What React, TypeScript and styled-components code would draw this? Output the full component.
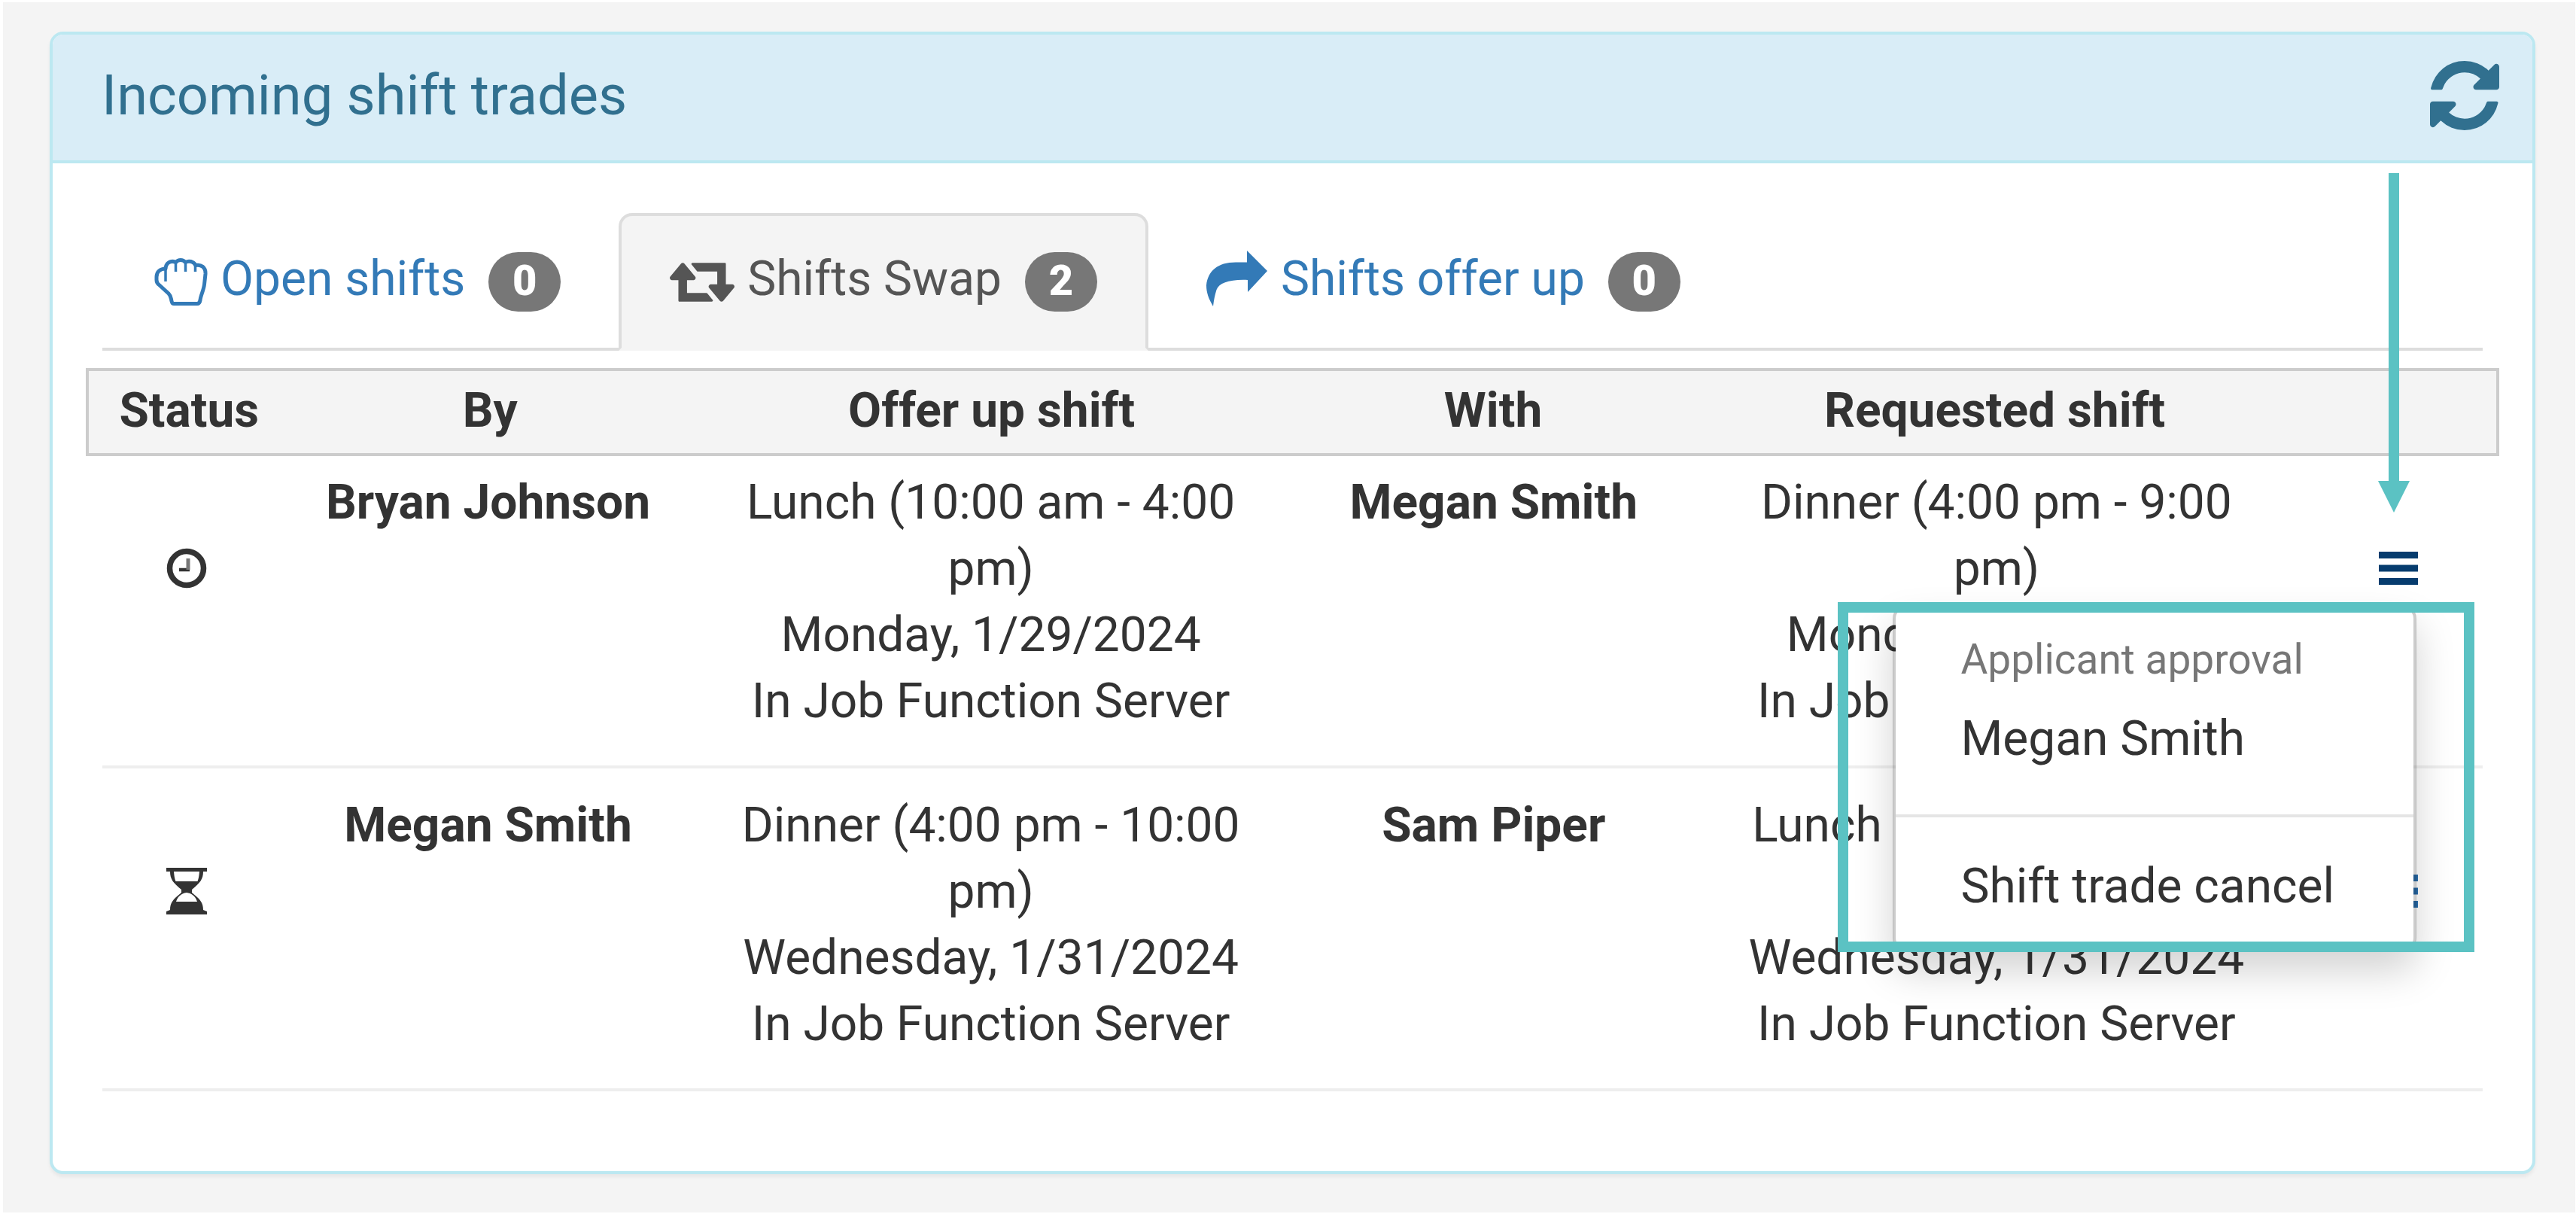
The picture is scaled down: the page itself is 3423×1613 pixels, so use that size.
import React from "react";
import styled, { createGlobalStyle } from "styled-components";

const GlobalStyle = createGlobalStyle`
  *, *::before, *::after { box-sizing: border-box; }
  body {
    margin: 0;
    background: #ffffff;
    color: #333333;
    font-family: Roboto, "Open Sans", sans-serif;
    font-size: 64px;
    line-height: 88px;
  }
  button { font: inherit; color: inherit; background: none; border: 0; padding: 0; cursor: pointer; }
  svg { display: block; flex: none; }
`;

const Page = styled.div`
  position: relative;
  min-height: 100vh;
  padding: 3px 1px 2px 4px;
  display: flex;
`;

const Backdrop = styled.main`
  flex: 1;
  padding: 39px 53px 51px 62px;
  background: #f4f4f4;
`;

const Panel = styled.section`
  background: #ffffff;
  border: 4px solid #bce8f1;
  border-radius: 18px;
  box-shadow: 0 4px 4px rgba(0, 0, 0, 0.05);
`;

const PanelHeader = styled.header`
  display: flex;
  align-items: center;
  justify-content: space-between;
  height: 171px;
  padding: 0 44px 5px 65px;
  background: #d9edf7;
  border-bottom: 4px solid #bce8f1;
  border-radius: 14px 14px 0 0;
  color: #31708f;
`;

const Title = styled.h1`
  margin: 0;
  font-size: 74px;
  font-weight: 400;
`;

const PanelBody = styled.div`
  padding: 66px 44px 106px;
`;

const Tabs = styled.nav`
  display: flex;
  gap: 9px;
  margin: 0 22px 23px;
  border-bottom: 4px solid #dddddd;
`;

const Tab = styled.button<{ $active?: boolean }>`
  display: flex;
  align-items: center;
  height: 183px;
  margin-bottom: -4px;
  padding: 0 64px;
  border: 4px solid transparent;
  border-radius: 18px 18px 0 0;
  color: ${(p) => (p.$active ? "#555555" : "#337ab7")};
  ${(p) =>
    p.$active &&
    `background: #f4f4f4;
     border-color: #dddddd #dddddd #f4f4f4;`}
`;

const TabLabel = styled.span`
  margin: 0 31px 0 17px;
  padding-bottom: 8px;
`;

const Badge = styled.span`
  min-width: 96px;
  height: 79px;
  border-radius: 44px;
  background: #777777;
  color: #ffffff;
  font-size: 56px;
  font-weight: 900;
  line-height: 76px;
  text-align: center;
`;

const Table = styled.table`
  display: block;
`;

const TableHead = styled.thead`
  display: block;
`;

const TableBody = styled.tbody`
  display: block;
`;

const columns = `
  display: grid;
  grid-template-columns: 1fr 2fr 3fr 2fr 3fr 1fr;
`;

const HeadRow = styled.tr`
  ${columns}
  height: 117px;
  margin-bottom: 18px;
  background: #f4f4f4;
  border: 4px solid #cccccc;
`;

const HeadCell = styled.th`
  padding: 9px 0;
  font-weight: 700;
`;

const Row = styled.tr`
  ${columns}
  padding-bottom: 45px;
  margin-bottom: 32px;
  background: linear-gradient(#eeeeee, #eeeeee) no-repeat center bottom / calc(100% - 44px) 4px;
  &:last-child { margin-bottom: 0; }
`;

const NameCell = styled.td`
  padding: 0;
  font-weight: 700;
  text-align: center;
`;

const ShiftCell = styled.td`
  padding: 0 48px;
  text-align: center;
`;

const IconCell = styled.td`
  display: flex;
  justify-content: center;
  padding: 87px 0 0;
`;

const IconSlot = styled.div`
  position: relative;
  display: flex;
  align-items: center;
  height: 88px;
`;

const MenuButton = styled.button<{ $open?: boolean }>`
  color: ${(p) => (p.$open ? "#063c6e" : "#2a6fae")};
`;

const Dropdown = styled.div`
  position: absolute;
  top: 93px;
  right: 2px;
  z-index: 1;
  width: 696px;
  padding: 22px 0;
  background: #ffffff;
  background-clip: padding-box;
  border: 4px solid rgba(0, 0, 0, 0.2);
  border-radius: 18px;
  box-shadow: 0 26px 52px rgba(0, 0, 0, 0.175);
`;

const DropdownHeading = styled.div`
  padding: 0 86px;
  font-size: 55px;
  line-height: 92px;
  color: #777777;
  white-space: nowrap;
`;

const DropdownItem = styled.button`
  display: block;
  width: 100%;
  padding: 16px 86px;
  text-align: left;
  white-space: nowrap;
`;

const Divider = styled.hr`
  height: 4px;
  margin: 40px 0 32px;
  border: 0;
  background: #e5e5e5;
`;

const Highlight = styled.div`
  position: absolute;
  top: 800px;
  right: 135px;
  z-index: 2;
  width: 846px;
  height: 465px;
  border: 14px solid #5bc2c3;
  pointer-events: none;
`;

const Pointer = styled.svg`
  position: absolute;
  top: 230px;
  right: 221px;
  z-index: 2;
`;

const RefreshIcon = () => (
  <svg width="92" height="92" viewBox="0 0 1536 1536" fill="currentColor" aria-hidden="true">
    <path d="M1511 928q0 5-1 7-64 268-268 434.5t-478 166.5q-146 0-282.5-55t-243.5-157l-129 129q-19 19-45 19t-45-19-19-45v-448q0-26 19-45t45-19h448q26 0 45 19t19 45-19 45l-137 137q71 66 161 102t187 36q134 0 250-65t186-179q11-17 53-117 8-23 30-23h192q13 0 22.500 9.500t9.500 22.500zm25-800v448q0 26-19 45t-45 19h-448q-26 0-45-19t-19-45 19-45l138-138q-148-137-349-137-134 0-250 65t-186 179q-11 17-53 117-8 23-30 23h-199q-13 0-22.500-9.500t-9.500-22.500v-7q65-268 270-434.500t480-166.500q146 0 284 55.500t245 156.500l130-129q19-19 45-19t45 19 19 45z" />
  </svg>
);

const HandIcon = () => (
  <svg width="72" height="66" viewBox="0 0 72 66" fill="none" stroke="currentColor" strokeLinejoin="round" aria-hidden="true">
    <path
      strokeWidth="5"
      d="M27 61.500H58C60.500 61.500 61.500 60 62 57C62.500 51 66.500 44 67.500 36L69 22C69.500 13 63 9 56 10.500C53 5 46.500 4 42.500 6.500C39 2.500 33 2.500 29.500 6.500C23 3.500 16.500 7 16 15C9 15 4 19 4 26V30C4 33 5 35 8 37L20 48C23.500 51.500 23 54 24 58C24.500 60.500 25.500 61.500 27 61.500Z"
    />
    <path strokeWidth="3.500" d="M16 14V32M29.500 7V19M42.500 7V19M55.500 10V19" />
  </svg>
);

const SwapIcon = () => (
  <svg width="86" height="52" viewBox="64 384 1920 1152" fill="currentColor" aria-hidden="true">
    <path d="M1344 1504q0 13-9.500 22.500t-22.500 9.500h-960q-8 0-13.500-2t-9-7-5.500-8-3-11.500-1-11.500v-600h-192q-26 0-45-19t-19-45q0-24 15-41l320-384q19-22 49-22t49 22l320 384q15 17 15 41 0 26-19 45t-45 19h-192v384h576q16 0 25 11l160 192q7 10 7 21zm640-416q0 24-15 41l-320 384q-20 23-49 23t-49-23l-320-384q-15-17-15-41 0-26 19-45t45-19h192v-384h-576q-16 0-25-12l-160-192q-7-9-7-20 0-13 9.500-22.500t22.500-9.500h960q8 0 13.500 2t9 7 5.500 8 3 11.500 1 11.500v600h192q26 0 45 19t19 45z" />
  </svg>
);

const ShareIcon = () => (
  <svg width="82" height="84" viewBox="0 0 82 84" fill="currentColor" aria-hidden="true">
    <path d="M54 0L81 27L55 55V39C31 38 17 43 13.500 52C11 60 10 66 9 74C3 64 0 56 0 46C2 27 15 15.500 39 15.500H54Z" />
  </svg>
);

const ClockIcon = () => (
  <svg width="54" height="54" viewBox="0 0 54 54" fill="none" stroke="currentColor" aria-hidden="true">
    <circle cx="27" cy="27" r="22.500" strokeWidth="7.500" />
    <path d="M17 29H31" strokeWidth="4.500" />
    <path d="M29 14V29" strokeWidth="5" stroke="#777777" />
  </svg>
);

const HourglassIcon = () => (
  <svg width="54" height="62" viewBox="0 0 54 62" fill="currentColor" aria-hidden="true">
    <path
      fillRule="evenodd"
      d="M0 0H54V5H49C49 15 45 20 34 29V33C45 42 49 46 49 56L54 58V62H0V58L5 56C5 46 9 42 20 33V29C9 20 5 15 5 5H0ZM10 5C10.500 11 11 14 12.500 18H41.500C43 14 43.500 11 44 5ZM27 33C19 34 15 39 13 45H41C39 39 35 34 27 33Z"
    />
  </svg>
);

const MenuIcon = () => (
  <svg width="52" height="44" viewBox="0 0 52 44" fill="currentColor" aria-hidden="true">
    <path d="M0 0H52V9H0ZM0 17.500H52V26.500H0ZM0 35H52V44H0Z" />
  </svg>
);

type Shift = { time: string; date: string; job: string };
type Trade = {
  status: "pending" | "waiting";
  by: string;
  offered: Shift;
  partner: string;
  requested: Shift;
  open?: boolean;
};

const trades: Trade[] = [
  {
    status: "pending",
    by: "Bryan Johnson",
    offered: { time: "Lunch (10:00 am - 4:00 pm)", date: "Monday, 1/29/2024", job: "In Job Function Server" },
    partner: "Megan Smith",
    requested: { time: "Dinner (4:00 pm - 9:00 pm)", date: "Monday, 1/29/2024", job: "In Job Function Server" },
    open: true,
  },
  {
    status: "waiting",
    by: "Megan Smith",
    offered: { time: "Dinner (4:00 pm - 10:00 pm)", date: "Wednesday, 1/31/2024", job: "In Job Function Server" },
    partner: "Sam Piper",
    requested: { time: "Lunch (10:00 am - 4:00 pm)", date: "Wednesday, 1/31/2024", job: "In Job Function Server" },
  },
];

const ShiftDetails = ({ shift }: { shift: Shift }) => (
  <ShiftCell>
    <div>{shift.time}</div>
    <div>{shift.date}</div>
    <div>{shift.job}</div>
  </ShiftCell>
);

const TradeRow = ({ trade }: { trade: Trade }) => (
  <Row>
    <IconCell>
      <IconSlot>{trade.status === "pending" ? <ClockIcon /> : <HourglassIcon />}</IconSlot>
    </IconCell>
    <NameCell>{trade.by}</NameCell>
    <ShiftDetails shift={trade.offered} />
    <NameCell>{trade.partner}</NameCell>
    <ShiftDetails shift={trade.requested} />
    <IconCell>
      <IconSlot>
        <MenuButton type="button" $open={trade.open} aria-label="Trade actions" aria-expanded={!!trade.open}>
          <MenuIcon />
        </MenuButton>
        {trade.open && (
          <Dropdown>
            <DropdownHeading>Applicant approval</DropdownHeading>
            <DropdownItem type="button">Megan Smith</DropdownItem>
            <Divider />
            <DropdownItem type="button">Shift trade cancel</DropdownItem>
          </Dropdown>
        )}
      </IconSlot>
    </IconCell>
  </Row>
);

export default function App() {
  return (
    <Page>
      <GlobalStyle />
      <Backdrop>
        <Panel>
          <PanelHeader>
            <Title>Incoming shift trades</Title>
            <button type="button" aria-label="Refresh">
              <RefreshIcon />
            </button>
          </PanelHeader>
          <PanelBody>
            <Tabs>
              <Tab type="button">
                <HandIcon />
                <TabLabel>Open shifts</TabLabel>
                <Badge>0</Badge>
              </Tab>
              <Tab type="button" $active>
                <SwapIcon />
                <TabLabel>Shifts Swap</TabLabel>
                <Badge>2</Badge>
              </Tab>
              <Tab type="button">
                <ShareIcon />
                <TabLabel>Shifts offer up</TabLabel>
                <Badge>0</Badge>
              </Tab>
            </Tabs>
            <Table>
              <TableHead>
                <HeadRow>
                  <HeadCell>Status</HeadCell>
                  <HeadCell>By</HeadCell>
                  <HeadCell>Offer up shift</HeadCell>
                  <HeadCell>With</HeadCell>
                  <HeadCell>Requested shift</HeadCell>
                  <HeadCell aria-label="Actions" />
                </HeadRow>
              </TableHead>
              <TableBody>
                {trades.map((trade) => (
                  <TradeRow key={trade.by} trade={trade} />
                ))}
              </TableBody>
            </Table>
          </PanelBody>
        </Panel>
      </Backdrop>
      <Pointer width="42" height="451" viewBox="0 0 42 451" fill="#5bc2c3" aria-hidden="true">
        <path d="M14 0H28V409H42L21 451L0 409H14Z" />
      </Pointer>
      <Highlight />
    </Page>
  );
}
